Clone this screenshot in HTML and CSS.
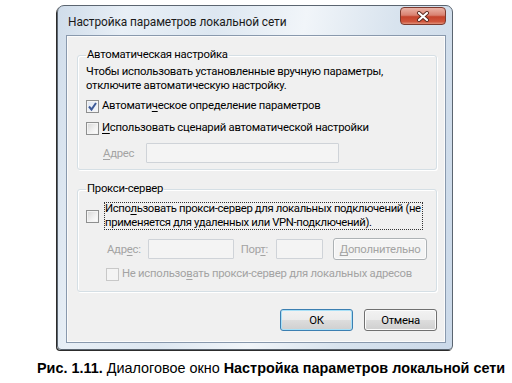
FILE: index.html
```html
<!DOCTYPE html>
<html lang="ru">
<head>
<meta charset="utf-8">
<title>Настройка параметров локальной сети</title>
<link rel="stylesheet" href="styles.css">
</head>
<body>
<div class="page">
  <div class="window">
    <div class="titlebar">
      <span class="title">Настройка параметров локальной сети</span>
      <span class="close">
        <svg width="14" height="11" viewBox="0 0 14 11"><path d="M3 2 L11 9 M11 2 L3 9" stroke="#5a2a20" stroke-width="4" stroke-linecap="round"/><path d="M3 2 L11 9 M11 2 L3 9" stroke="#ffffff" stroke-width="2.2" stroke-linecap="round"/></svg>
      </span>
    </div>
    <div class="client">
      <fieldset class="group g1">
        <legend>Автоматическая настройка</legend>
        <p class="note">Чтобы использовать установленные вручную параметры,<br>отключите автоматическую настройку.</p>
        <div class="check row1"><span class="box checked"><svg width="11" height="11" viewBox="0 0 11 11"><path d="M2 5.5 L4.5 8.5 L9 2" fill="none" stroke="#3d5a98" stroke-width="2"/></svg></span><span>Автомати<u>ч</u>еское определение параметров</span></div>
        <div class="check row2"><span class="box"></span><span><u>И</u>спользовать сценарий автоматической настройки</span></div>
        <div class="addr">
          <span class="dis"><u>А</u>дрес</span>
          <span class="input wide"></span>
        </div>
      </fieldset>
      <fieldset class="group g2">
        <legend>Прокси-сервер</legend>
        <div class="check proxy"><span class="box"></span><span class="focus">Испо<u>л</u>ьзовать прокси-сервер для локальных подключений (не<br>применяется для удаленных или VPN-подключений).</span></div>
        <div class="proxyrow">
          <span class="dis lbl1">Адр<u>е</u>с:</span>
          <span class="input addrin"></span>
          <span class="dis lbl2">Пор<u>т</u>:</span>
          <span class="input portin"></span>
          <span class="btn disabled"><u>Д</u>ополнительно</span>
        </div>
        <div class="check bypass"><span class="box disbox"></span><span class="dis">Не использо<u>в</u>ать прокси-сервер для локальных адресов</span></div>
      </fieldset>
      <div class="buttons">
        <span class="btn default">ОК</span>
        <span class="btn">Отмена</span>
      </div>
    </div>
  </div>
  <p class="caption"><b>Рис. 1.11.</b> Диалоговое окно <b>Настройка параметров локальной сети</b></p>
</div>
</body>
</html>
```
FILE: styles.css
```css
html, body {
  margin: 0;
  padding: 0;
  background: #ffffff;
}
body {
  width: 512px;
  height: 383px;
  overflow: hidden;
  font-family: Roboto, "Noto Sans", sans-serif;
  font-size: 11.3px;
  letter-spacing: -0.25px;
  color: #000;
}
.page {
  display: flex;
  flex-direction: column;
  padding-top: 5px;
}
.window {
  box-sizing: border-box;
  margin-left: 57px;
  width: 396px;
  height: 345px;
  border: 1px solid #5b6570;
  border-radius: 7px 7px 4px 4px;
  background: linear-gradient(100deg, #cfdcea 0%, #e8eff6 15%, #dde7f1 35%, #f1f5f9 55%, #d8e3ee 75%, #cbd9e9 100%);
  box-shadow: -1px 1px 0 #2c2c2c;
  padding: 0 6px 6px 8px;
  display: flex;
  flex-direction: column;
}
.titlebar {
  height: 29px;
  flex: none;
  display: flex;
  align-items: flex-start;
  justify-content: space-between;
}
.title {
  font-size: 11.9px;
  letter-spacing: -0.1px;
  line-height: 16px;
  margin-top: 8px;
  margin-left: 2px;
  color: #1a1a1a;
}
.close {
  margin-top: 1px;
  width: 46px;
  height: 18px;
  box-sizing: border-box;
  border: 1px solid #7c3a2e;
  border-radius: 4px;
  background: linear-gradient(#eab3a6 0%, #d98170 45%, #c4432c 55%, #d0553c 85%, #e0917a 100%);
  display: flex;
  align-items: center;
  justify-content: center;
}
.client {
  flex: 1;
  box-sizing: border-box;
  border: 1px solid #8999ad;
  background: #f0f0f0;
  box-shadow: inset 0 0 0 1px #fbfbfb;
  display: flex;
  flex-direction: column;
  padding: 11px 8px 0 10px;
}
.group {
  margin: 0;
  min-width: 0;
  border: 1px solid #d5dfe5;
  border-radius: 3px;
  box-shadow: inset 1px 1px 0 #fff, 1px 1px 0 #fff;
  padding: 2px 8px 6px 8px;
}
.group legend {
  padding: 0 1px;
  margin-left: 0;
  line-height: 16px;
}
.note {
  margin: 0;
  line-height: 14px;
}
.check {
  display: flex;
  align-items: center;
  line-height: 16px;
}
.box {
  box-sizing: border-box;
  width: 13px;
  height: 13px;
  flex: none;
  border: 1px solid #8e8f8f;
  background: linear-gradient(135deg, #d6d6d6 0%, #f2f2f2 60%, #fff 100%);
  box-shadow: inset 0 0 0 1px #f4f4f4;
  margin-right: 3px;
  display: flex;
  align-items: center;
  justify-content: center;
}
.box.checked {
  background: linear-gradient(135deg, #dfe6f3 0%, #f4f7fb 100%);
}
.row1 { margin-top: 5px; }
.row2 { margin-top: 6px; }
.addr {
  display: flex;
  align-items: center;
  margin-top: 7px;
  padding-left: 17px;
}
.dis { color: #a3a3a3; }
.input {
  box-sizing: border-box;
  height: 20px;
  flex: none;
  border: 1px solid #cfd3d8;
  background: #f4f4f4;
  border-radius: 1px;
}
.input.wide {
  width: 193px;
  margin-left: 12px;
}
.g2 {
  margin-top: 11px;
  padding-bottom: 9px;
}
.proxy {
  margin-top: 3px;
}
.focus {
  line-height: 14px;
  letter-spacing: -0.35px;
  outline: 1px dotted #333;
  outline-offset: -1px;
  padding: 0 2px 0 1px;
  margin-left: 2px;
  white-space: nowrap;
}
.proxyrow {
  display: flex;
  align-items: center;
  margin-top: 8px;
  padding-left: 21px;
}
.addrin { width: 86px; margin-left: 7px; }
.lbl2 { margin-left: 7px; }
.portin { width: 47px; margin-left: 8px; }
.btn {
  box-sizing: border-box;
  height: 22px;
  flex: none;
  border: 1px solid #707070;
  border-radius: 3px;
  background: linear-gradient(#f2f2f2 0%, #ebebeb 50%, #dddddd 51%, #cfcfcf 100%);
  box-shadow: inset 0 0 0 1px #fcfcfc;
  display: flex;
  align-items: center;
  justify-content: center;
  width: 73px;
}
.btn.disabled {
  width: 94px;
  margin-left: 10px;
  color: #a3a3a3;
  border-color: #adb2b5;
  background: #f4f4f4;
}
.bypass {
  margin-top: 6px;
  padding-left: 20px;
  white-space: nowrap;
}
.box.disbox {
  border-color: #c8c8c8;
  background: #f4f4f4;
}
.buttons {
  display: flex;
  justify-content: flex-end;
  gap: 11px;
  margin-top: 17px;
}
.btn.default {
  border-color: #3c7fb1;
  box-shadow: inset 0 0 0 1px #a8e0f7;
}
.caption {
  margin: 9px 0 0 37px;
  font-family: "Liberation Sans", Arial, sans-serif;
  font-size: 14.4px;
  letter-spacing: 0;
  line-height: 18px;
  white-space: nowrap;
}
u { text-decoration-thickness: 1px; text-underline-offset: 2px; }
```
